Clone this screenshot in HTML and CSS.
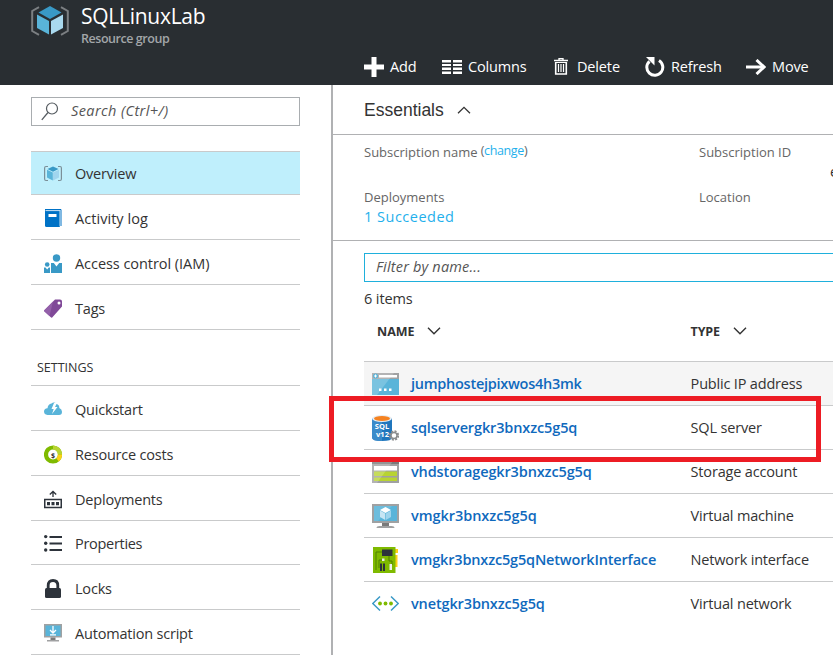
FILE: index.html
```html
<!DOCTYPE html>
<html lang="en">
<head>
<meta charset="utf-8">
<title>SQLLinuxLab</title>
<link rel="stylesheet" href="styles.css">
</head>
<body>
<svg class="defs" width="0" height="0">
  <symbol id="group" viewBox="0 0 38 30">
    <path d="M8 1.2 1.2 5v20L8 28.800M30 1.200 36.800 5v20L30 28.800" fill="none" stroke="#7b7f82" stroke-width="2"/>
    <path d="M19 0 30.500 6.500 19 13 7.500 6.500z" fill="#3999c6"/>
    <path d="M6 8.500 18 15v13.500L6 22z" fill="#59b4d9"/>
    <path d="M32 8.500 20 15v13.500L32 22z" fill="#a9d9ee"/>
  </symbol>
</svg>
<header class="header">
  <div class="brand">
    <svg class="brand-icon" width="38" height="30"><use href="#group"/></svg>
    <div>
      <h1 class="title">SQLLinuxLab</h1>
      <p class="subtitle">Resource group</p>
    </div>
  </div>
  <nav class="toolbar">
    <a class="tool add"><svg width="20" height="20"><path d="M7.500 0h5v7.500H20v5h-7.500V20h-5v-7.500H0v-5h7.500z" fill="#fff"/></svg><span>Add</span></a>
    <a class="tool columns"><svg width="20" height="14"><path d="M0 0h9v2.500H0zM11 0h9v2.500h-9zM0 4h9v2H0zM11 4h9v2h-9zM0 7.500h9V10H0zM11 7.500h9V10h-9zM0 11.500h9V14H0zM11 11.500h9V14h-9z" fill="#fff"/></svg><span>Columns</span></a>
    <a class="tool delete"><svg width="14" height="17"><path d="M0 2.500h14M5 2V.6h4V2" stroke="#fff" stroke-width="1.300" fill="none"/><path d="M1.700 4v12h10.600V4" fill="none" stroke="#fff" stroke-width="1.600"/><path d="M1 4.500h12M4.500 6v8M7 6v8M9.500 6v8" stroke="#fff" stroke-width="1.200"/></svg><span>Delete</span></a>
    <a class="tool refresh"><svg width="20" height="20"><path d="M14 3.500a8 8 0 1 1-9.500.8" fill="none" stroke="#fff" stroke-width="3"/><path d="M1 0h8.500v8.500z" fill="#fff"/></svg><span>Refresh</span></a>
    <a class="tool move"><svg width="20" height="16"><path d="M0 8h17" stroke="#fff" stroke-width="3"/><path d="M10.500 1 18 8l-7.500 7" fill="none" stroke="#fff" stroke-width="3"/></svg><span>Move</span></a>
  </nav>
</header>
<div class="body">
  <aside class="sidebar">
    <div class="search">
      <svg width="18" height="19"><circle cx="11" cy="6.500" r="5.500" fill="none" stroke="#555b60" stroke-width="1.200"/><path d="M7 10.500.8 17.800" stroke="#555b60" stroke-width="1.300"/></svg>
      <span>Search (Ctrl+/)</span>
    </div>
    <ul class="menu">
      <li class="active"><svg width="18" height="18" viewBox="0 0 18 18"><path d="M4 1.500H2Q.6 1.500.6 3v11q0 1.500 1.400 1.500h2M14 1.500h2q1.400 0 1.400 1.500v11q0 1.500-1.400 1.500h-2" fill="none" stroke="#7b8f98" stroke-width="1.200"/><path d="M9 1.500 14.500 4 9 6.800 3.500 4z" fill="#3999c6"/><path d="M3 4.800 8.800 7.500V15.500L3 12.500z" fill="#59b4d9"/><path d="M15 4.800 9 7.500V15.500l6-3z" fill="#a0d5ee"/></svg><span class="t-overview">Overview</span></li>
      <li><svg width="18" height="19"><path d="M1 1h15v17H2.500Q1 18 1 16.500z" fill="#0072c6"/><path d="M1.500 1.600h14.500v16" fill="none" stroke="#fff" stroke-width=".8"/><path d="M1 .5h16V17" fill="none" stroke="#0072c6"/><path d="M4.500 5h8v3h-8z" fill="#fff"/></svg><span class="t-activity">Activity log</span></li>
      <li><svg width="18" height="19"><g fill="#3999c6"><circle cx="12.500" cy="4" r="3.700"/><path d="M7 9h2.800l2.700 3.500L15.200 9H18v10H7z"/><circle cx="3.200" cy="10.500" r="2.300"/><path d="M0 13.500h1.500l1.700 2 1.600-2H6V19H0z"/></g></svg><span class="t-access">Access control (IAM)</span></li>
      <li><svg width="18" height="19"><path d="M11 .5h5q2 0 2 2v5L8.200 18.500Q7.500 19 6.800 18.300L.5 12.500Q-.2 11.700.5 11z" fill="#804998"/><path d="M11 .5 .5 11q-.7.700 0 1.500l5 4.500L9 2.500z" fill="#9360a9"/><circle cx="15" cy="4" r="1.500" fill="#fff"/></svg><span class="t-tags">Tags</span></li>
    </ul>
    <h2 class="menu-title"><span>SETTINGS</span></h2>
    <ul class="menu settings">
      <li><svg width="18" height="14"><path d="M3.500 13Q0 12.500 0 9.500 0 6.500 3.500 6.200 4 2 7.500 1.500 10-.5 12.500 2q3 .5 2.800 4Q18 7 18 9.800 18 13 15 13z" fill="#59b4d9"/><path d="M10 1 7.500 7h2.200L8 12l5.500-7h-2.500L13 1z" fill="#fff"/></svg><span class="t-quick">Quickstart</span></li>
      <li><svg width="18" height="19"><circle cx="9" cy="9.500" r="7" fill="#fff" stroke="#7fba00" stroke-width="4.200"/><path d="M9 2.500a7 7 0 0 1 7 7" fill="none" stroke="#b8d432" stroke-width="4.200"/><path d="M16 9.500a7 7 0 0 1-2.500 5.400" fill="none" stroke="#fcd116" stroke-width="4.200"/><text x="9" y="12.500" class="dollar">$</text></svg><span class="t-costs">Resource costs</span></li>
      <li><svg width="18" height="19"><path d="M9 7V1.500M5.800 4.500 9 1.500l3.200 3" fill="none" stroke="#2d333b" stroke-width="1.300"/><path d="M.75 9.500h16.500v8H.75z" fill="none" stroke="#2d333b" stroke-width="1.500"/><path d="M3 12h3v3.200H3zM7.500 12h3v3.200h-3zM12 12h3v3.200h-3z" fill="#2d333b"/></svg><span class="t-deploy">Deployments</span></li>
      <li><svg width="18" height="19"><path d="M5.500 3h12.500M5.500 9.500h12.500M5.500 16h12.500" stroke="#2d333b" stroke-width="2"/><g fill="#2d333b"><circle cx="1.700" cy="2.600" r="1.700"/><circle cx="1.700" cy="9.200" r="1.700"/><circle cx="1.700" cy="16" r="1.700"/></g></svg><span class="t-prop">Properties</span></li>
      <li><svg width="18" height="19"><path d="M4.200 10V6.500Q4.200 1.500 9 1.500t4.800 5V10" fill="none" stroke="#2d333b" stroke-width="2.800"/><rect x="1" y="9" width="16" height="10" rx="1.500" fill="#2d333b"/></svg><span class="t-locks">Locks</span></li>
      <li><svg width="18" height="18"><path d="M0 0h18v13.500H0z" fill="#a0a1a2"/><path d="M1.500 1.500h15V12h-15z" fill="#59b4d9"/><path d="M9 2v6.500M6 6l3 3 3-3M6 10.800h6" stroke="#fff" stroke-width="1.300" fill="none"/><path d="M6.500 13.500h5V16h-5z" fill="#7a7a7a"/><path d="M3 16h12v1.500H3z" fill="#a0a1a2"/></svg><span class="t-auto">Automation script</span></li>
    </ul>
  </aside>
  <main class="main">
    <div class="essentials-head"><span>Essentials</span><svg width="14" height="8"><path d="m1 7.300 6-6 6 6" fill="none" stroke="#333" stroke-width="1.300"/></svg></div>
    <section class="essentials">
      <div class="fact"><p class="label"><span class="t-sub">Subscription name</span><small>(<a>change</a>)</small></p></div>
      <div class="fact"><p class="label t-subid">Subscription ID</p><p class="value clipped">e</p></div>
      <div class="fact"><p class="label t-dep">Deployments</p><p class="value"><a>1 Succeeded</a></p></div>
      <div class="fact"><p class="label t-loc">Location</p></div>
    </section>
    <section class="resources">
      <div class="filter"><span>Filter by name...</span></div>
      <p class="count"><span>6 items</span></p>
      <div class="row head">
        <div class="name"><span class="t-name">NAME</span><svg width="14" height="8"><path d="m1 .8 6 6 6-6" fill="none" stroke="#333" stroke-width="1.400"/></svg></div>
        <div class="type"><span class="t-type">TYPE</span><svg width="14" height="8"><path d="m1 .8 6 6 6-6" fill="none" stroke="#333" stroke-width="1.400"/></svg></div>
      </div>
      <div class="row hover">
        <div class="name"><svg width="27" height="26"><path d="M0 2h27v22H0z" fill="#59b4d9"/><path d="M0 2h27v6H0z" fill="#a0a1a2"/><path d="M0 2h22L5 24H0z" fill="#fff" opacity=".2"/><path d="M7 4h18v2.500H7z" fill="#fff"/><circle cx="3.500" cy="5" r="2.500" fill="#59b4d9"/><path d="M2 5h3M3.500 3.500v3" stroke="#fff"/><path d="M7 17.500h2.500V20H7zM12 17.500h2.500V20H12zM17 17.500h2.500V20H17z" fill="#fff"/></svg><a class="r1">jumphostejpixwos4h3mk</a></div>
        <div class="type t1">Public IP address</div>
      </div>
      <div class="row marked">
        <div class="name"><svg width="27" height="26"><path d="M0 3v19.500Q0 26 10 26t10-3.500V3z" fill="#1f76bd"/><path d="M0 3v19.500Q0 26 10 26V3z" fill="#3b8bca"/><ellipse cx="10" cy="3.500" rx="10" ry="3.500" fill="#e8eef3"/><ellipse cx="10" cy="3.500" rx="8" ry="2.500" fill="#f58220"/><text x="10" y="14" class="sql">SQL</text><text x="10.500" y="22" class="sql">v12</text><circle cx="22" cy="20.500" r="4.200" fill="none" stroke="#8b8d8e" stroke-width="2" stroke-dasharray="2 1.300"/><circle cx="22" cy="20.500" r="3" fill="#fff" stroke="#8b8d8e" stroke-width="1.500"/></svg><a class="r2">sqlservergkr3bnxzc5g5q</a></div>
        <div class="type t2">SQL server</div>
      </div>
      <div class="row">
        <div class="name"><svg width="27" height="26"><path d="M0 2h27v22H0z" fill="#a0a1a2"/><path d="M0 2h27v3H0z" fill="#7a7a7a"/><path d="M2 7h23v4.500H2z" fill="#fff"/><path d="M2 12.500h23V17H2zM2 18.500h23V22H2z" fill="#b8d432"/><path d="M0 2h21L5 24H0z" fill="#fff" opacity=".2"/></svg><a class="r3">vhdstoragegkr3bnxzc5g5q</a></div>
        <div class="type t3">Storage account</div>
      </div>
      <div class="row">
        <div class="name"><svg width="27" height="26"><path d="M0 1h27v19H0z" fill="#a0a1a2"/><path d="M2 3h23v15H2z" fill="#59b4d9"/><path d="M2 3h18L6 18H2z" fill="#fff" opacity=".12"/><path d="M13.500 4 19 7l-5.500 3L8 7z" fill="#fff"/><path d="m8 7.500 5.200 3V17L8 14z" fill="#c7e6f4"/><path d="m19 7.500-5.200 3V17l5.200-3z" fill="#9fd4ec"/><path d="M10 20h7v3h-7z" fill="#7a7a7a"/><path d="M4.500 25q0-2 3-2h12q3 0 3 2z" fill="#a0a1a2"/></svg><a class="r4">vmgkr3bnxzc5g5q</a></div>
        <div class="type t4">Virtual machine</div>
      </div>
      <div class="row">
        <div class="name"><svg width="27" height="26"><path d="M23 2h3v4h-3zM23 8h2.500v12H23z" fill="#fcd116"/><path d="M1 0h22.500v26H1z" fill="#7fba00"/><path d="M4 23V5h6M7 21v-8h3M17 9v5h3v4" fill="none" stroke="#518000" stroke-width="1"/><path d="M10 2.500h10.500V9H10zM8 16.500h2V24H8zM11 16.500h2V24h-2z" fill="#2d333b"/><path d="M10 11.500h2.500V14H10zM17.500 17h2.500v6h-2.500z" fill="#eee"/></svg><a class="r5">vmgkr3bnxzc5g5qNetworkInterface</a></div>
        <div class="type t5">Network interface</div>
      </div>
      <div class="row">
        <div class="name"><svg width="27" height="26"><path d="M8 5.500.8 12.500 8 19.500M19 5.500l7.200 7-7.200 7" fill="none" stroke="#3999c6" stroke-width="1.500"/><g fill="#7fba00"><circle cx="8" cy="12.500" r="1.900"/><circle cx="13.500" cy="12.500" r="1.900"/><circle cx="19" cy="12.500" r="1.900"/></g></svg><a class="r6">vnetgkr3bnxzc5g5q</a></div>
        <div class="type t6">Virtual network</div>
      </div>
    </section>
  </main>
</div>
</body>
</html>
```
FILE: styles.css
```css
*, *::after { box-sizing: border-box; }
html, body { height: 100%; }
body { margin: 0; overflow: hidden; background: #fff; color: #333; font: 14.500px/20px "Open Sans", "Noto Sans", sans-serif; white-space: nowrap; }
h1, h2, p, ul { margin: 0; padding: 0; font-weight: 400; }
ul { list-style: none; }
svg { flex: none; display: block; }
.defs { position: absolute; }

.header { height: 85px; background: #292e32; color: #fff; display: grid; grid-template-rows: 48px 37px; }
.brand { display: flex; padding: 6px 0 0 31px; gap: 12px; }
.title { font-size: 21px; line-height: 20px; letter-spacing: -.27px; margin-bottom: 3px; }
.subtitle { font-size: 12.500px; line-height: 20px; font-weight: 600; color: #a2a6a9; letter-spacing: -.45px; }
.toolbar { display: flex; align-items: center; padding-left: 364px; letter-spacing: -.15px; }
.tool { display: flex; align-items: center; height: 37px; }
.tool svg { margin-right: 6px; }
.add { width: 78px; }
.columns { width: 112px; }
.delete { width: 91px; }
.delete svg { margin-right: 9px; }
.refresh { width: 101px; }

.body { display: grid; grid-template-columns: 331px 1fr; height: 570px; }
.sidebar { padding: 12px 31px 0; }
.search { height: 29px; border: 1px solid #a9adb0; display: flex; align-items: center; padding-left: 9px; gap: 12px; font-style: italic; color: #555; letter-spacing: .4px; }
.search span { padding-bottom: 2px; }
.menu { margin-top: 25px; border-top: 1px solid #c9cacb; }
.menu li { height: 45px; border-bottom: 1px solid #c9cacb; display: flex; align-items: center; padding: 2px 0 0 13px; gap: 13px; letter-spacing: -.2px; }
.menu span { padding-top: 1px; }
.menu .active { height: 43px; background: #bfeffc; padding-top: 1px; }
.menu .t-activity { letter-spacing: .05px; }
.menu .t-access { letter-spacing: -.05px; }
.menu .t-prop { letter-spacing: -.3px; }
.menu-title { height: 55px; padding: 28px 0 0 6px; font-size: 12.500px; line-height: 20px; }
.settings { margin-top: 0; }
.settings li:nth-child(4) { height: 44px; }
.dollar { font: 700 7px "Open Sans", sans-serif; text-anchor: middle; fill: #333; letter-spacing: 0; }

.main { border-left: 2px solid #b0b1b3; min-width: 0; overflow: visible; }
.essentials-head { height: 50px; border-bottom: 1px solid #b0b1b3; padding-left: 31px; display: flex; align-items: center; gap: 13px; font: 17.500px/20px "Liberation Sans", sans-serif; }
.essentials { height: 106px; border-bottom: 1px solid #b0b1b3; padding: 8px 0 0 31px; display: grid; grid-template-columns: 335px 1fr; grid-template-rows: 45px 45px; }
.label { font-size: 13px; line-height: 19px; color: #666; }
.label small { font-size: 12.500px; margin-left: 3px; position: relative; top: -2px; letter-spacing: -.35px; }
.essentials a { color: #1fb0ec; }
.value { line-height: 20px; letter-spacing: .5px; }
.clipped { padding-left: 131px; }
.resources { padding: 12px 0 0 31px; }
.filter { height: 29px; border: 1px solid #1fb0dc; border-right: 0; padding-left: 11px; line-height: 25px; font-style: italic; color: #555; letter-spacing: .18px; }
.count { margin-top: 7px; line-height: 20px; letter-spacing: -.1px; }
.row { position: relative; height: 44px; display: grid; grid-template-columns: 326px 1fr; border-top: 1px solid #c9cacb; line-height: 43px; }
.name { display: flex; align-items: center; padding-left: 8px; gap: 12px; }
.name a { color: #0f69bd; font-weight: 600; letter-spacing: -.13px; }
.name .r1 { letter-spacing: -.26px; }
.name .r4 { letter-spacing: -.05px; }
.name .r5 { letter-spacing: -.17px; }
.head { height: 52px; border: 0; padding: 0 0 8px; font-size: 12.500px; font-weight: 700; }
.head .name { padding-left: 13px; }
.type { display: flex; align-items: center; gap: 13px; padding-left: .6px; letter-spacing: -.18px; }
.hover { background: #f5f5f5; }
.marked::after { content: ""; position: absolute; left: -35px; top: -10px; width: 492px; height: 66px; border: 5px solid #ed1c24; z-index: 2; }
.sql { font: 700 7.500px "Open Sans", sans-serif; text-anchor: middle; fill: #fff; }
```
